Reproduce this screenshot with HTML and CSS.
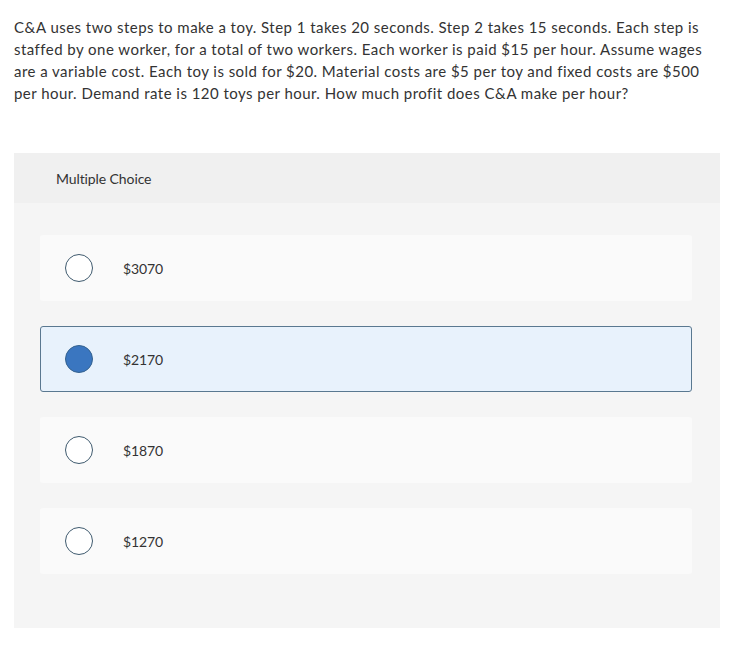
FILE: index.html
```html
<!DOCTYPE html>
<html lang="en">
<head>
<meta charset="utf-8">
<link rel="stylesheet" href="styles.css">
</head>
<body>
<div class="page">
  <p class="question">C&amp;A uses two steps to make a toy. Step 1 takes 20 seconds. Step 2 takes 15 seconds. Each step is staffed by one worker, for a total of two workers. Each worker is paid $15 per hour. Assume wages are a variable cost. Each toy is sold for $20. Material costs are $5 per toy and fixed costs are $500 per hour. Demand rate is 120 toys per hour. How much profit does C&amp;A make per hour?</p>
  <section class="panel">
    <div class="panel-header">Multiple Choice</div>
    <div class="panel-body">
      <div class="option"><span class="radio"></span><span class="label">$3070</span></div>
      <div class="option selected"><span class="radio"></span><span class="label">$2170</span></div>
      <div class="option"><span class="radio"></span><span class="label">$1870</span></div>
      <div class="option"><span class="radio"></span><span class="label">$1270</span></div>
    </div>
  </section>
</div>
</body>
</html>
```
FILE: styles.css
```css
html, body {
  margin: 0;
  padding: 0;
  background: #ffffff;
}
body {
  font-family: "Lato", "Open Sans", sans-serif;
  color: #333333;
}
.page {
  padding: 16px 34px 0 14px;
}
.question {
  margin: 0;
  font-size: 15px;
  line-height: 22px;
  letter-spacing: 0.46px;
  color: #333;
}
.panel {
  margin-top: 49px;
  width: 706px;
  background: #f5f5f5;
}
.panel-header {
  height: 50px;
  background: #f0f0f0;
  display: flex;
  align-items: center;
  padding-left: 42px;
  font-size: 14px;
  letter-spacing: -0.1px;
  color: #333;
}
.panel-body {
  padding: 32px 28px 54px 26px;
  display: flex;
  flex-direction: column;
  gap: 25px;
}
.option {
  height: 66px;
  box-sizing: border-box;
  background: #fafafa;
  border-radius: 3px;
  display: flex;
  align-items: center;
  padding-left: 24px;
  border: 1px solid transparent;
}
.option.selected {
  background: #e8f2fc;
  border-color: #5a7890;
}
.radio {
  width: 28px;
  height: 28px;
  box-sizing: border-box;
  border-radius: 50%;
  border: 1.5px solid #3f5a6e;
  background: #fff;
  flex: none;
}
.option.selected .radio {
  background: #3a76c0;
  border-color: #34628f;
}
.label {
  margin-left: 30px;
  font-size: 14px;
  letter-spacing: -0.1px;
  color: #333;
}
```
